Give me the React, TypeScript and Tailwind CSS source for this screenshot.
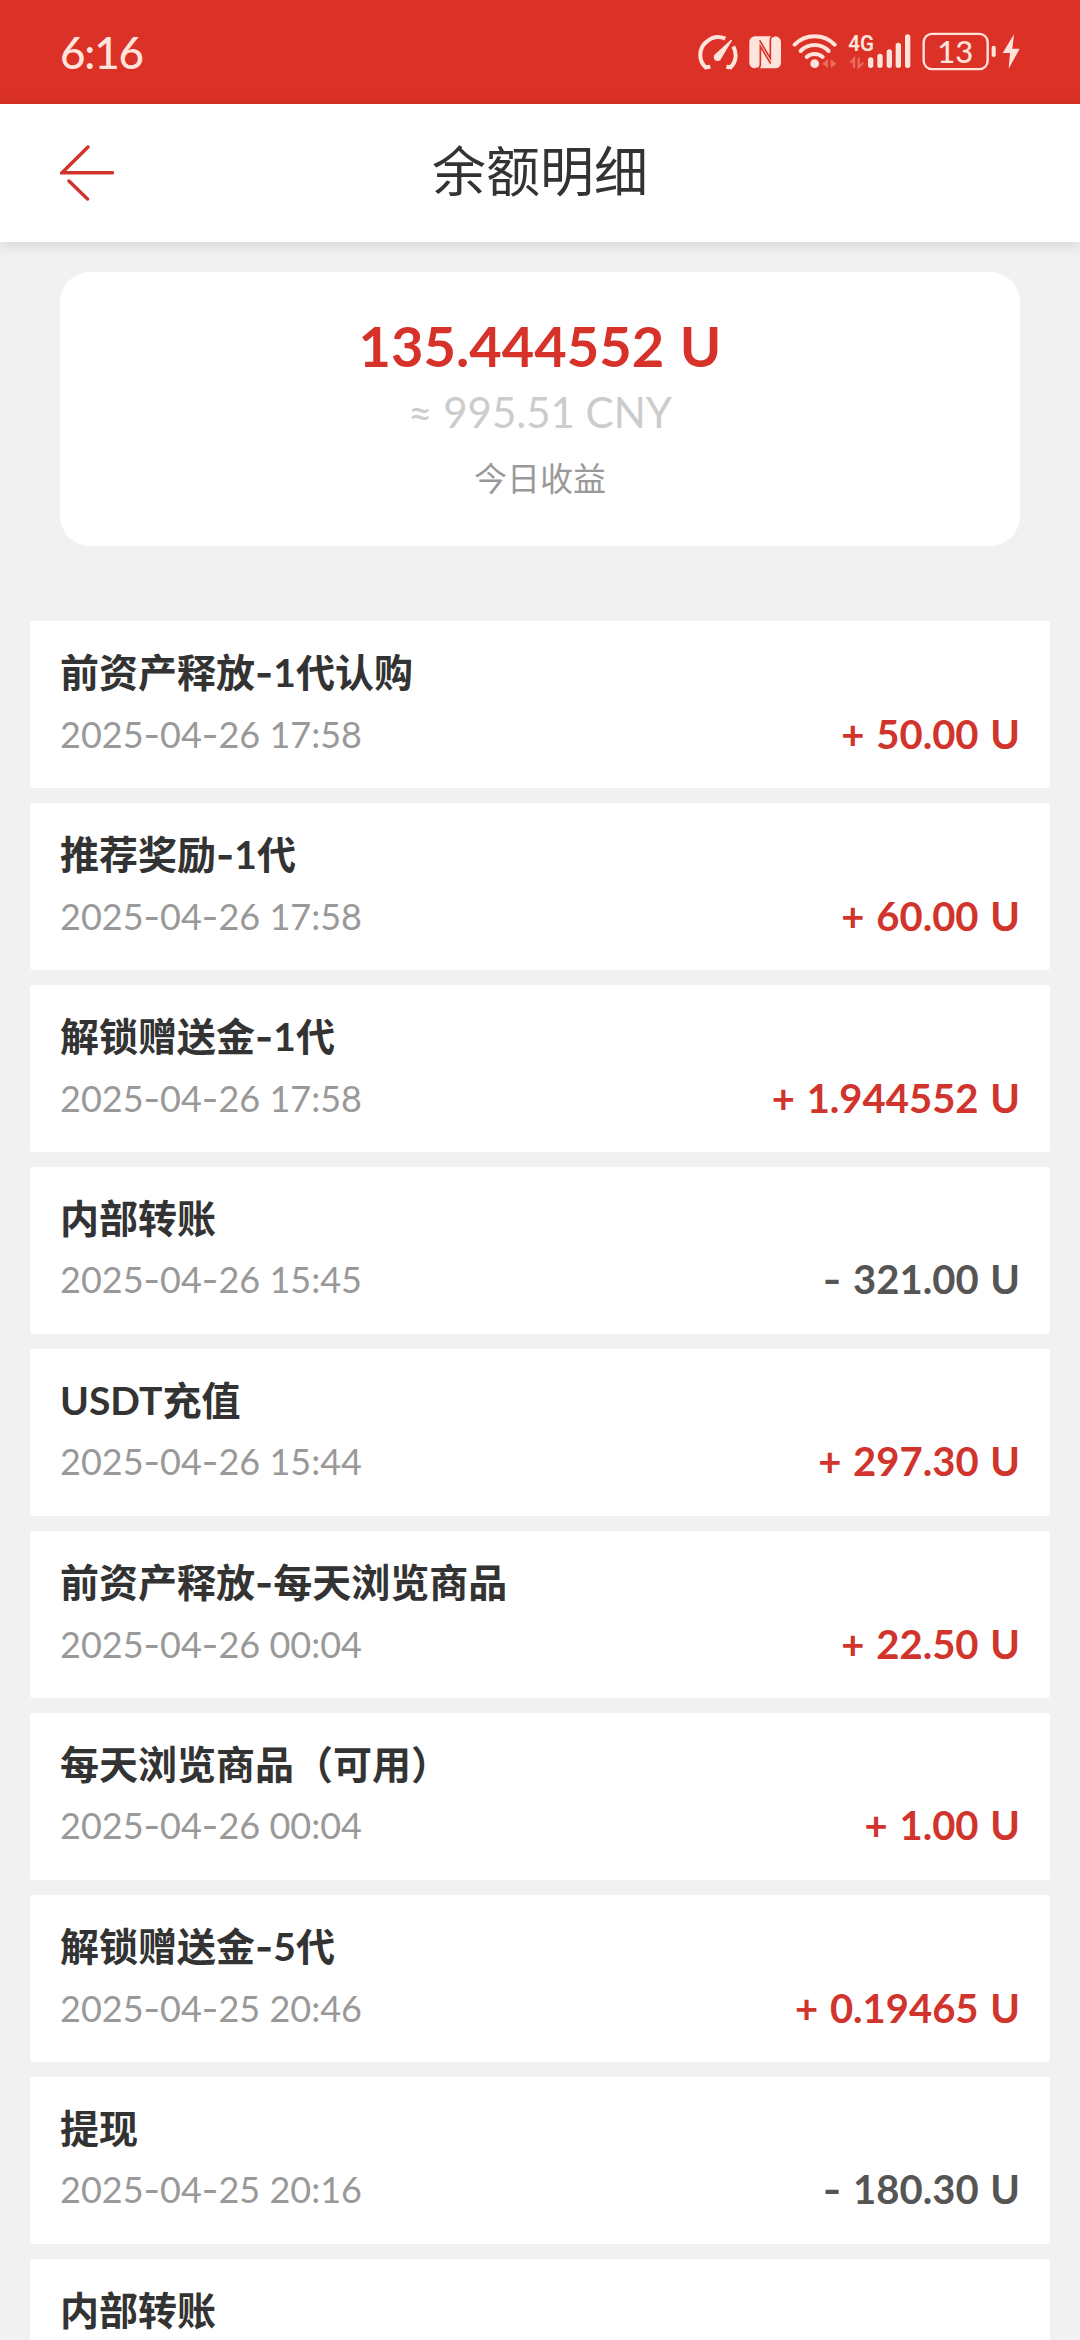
import React from 'react';

type RecordItem = {
  title: string;
  time?: string;
  amount?: string;
  income?: boolean;
};

const records: RecordItem[] = [
  { title: '前资产释放-1代认购', time: '2025-04-26 17:58', amount: '50.00', income: true },
  { title: '推荐奖励-1代', time: '2025-04-26 17:58', amount: '60.00', income: true },
  { title: '解锁赠送金-1代', time: '2025-04-26 17:58', amount: '1.944552', income: true },
  { title: '内部转账', time: '2025-04-26 15:45', amount: '321.00' },
  { title: 'USDT充值', time: '2025-04-26 15:44', amount: '297.30', income: true },
  { title: '前资产释放-每天浏览商品', time: '2025-04-26 00:04', amount: '22.50', income: true },
  { title: '每天浏览商品（可用）', time: '2025-04-26 00:04', amount: '1.00', income: true },
  { title: '解锁赠送金-5代', time: '2025-04-25 20:46', amount: '0.19465', income: true },
  { title: '提现', time: '2025-04-25 20:16', amount: '180.30' },
  { title: '内部转账' },
];

// Lato's hyphen is short and low, so hyphens use Inter
const Dashed = ({ text }: { text: string }) => (
  <>
    {text.split('-').map((part, i) => (
      <React.Fragment key={i}>
        {i > 0 && <span className="font-[Inter]">-</span>}
        {part}
      </React.Fragment>
    ))}
  </>
);

const StatusIcons = () => (
  <div className="flex items-center text-[#ffe4dc]">
    {/* Speed gauge */}
    <svg className="h-[38px] w-[40px]" viewBox="49 40 120 114" fill="none" stroke="currentColor" strokeWidth="12">
      <path d="M86 141 L72 143 C50 122 50 86 75 66 C91 52 112 49 131 57" />
      <path d="M155 80 C167 103 163 128 147 143 L134 141" />
      <path d="M149 62 L118 114 A10 10 0 1 1 104 103 Z" fill="currentColor" strokeWidth="4" strokeLinejoin="round" />
    </svg>

    {/* NFC */}
    <svg className="ml-[11px] h-[38px] w-[33px]" viewBox="202 40 99 114" fill="none" stroke="#dc3126" strokeWidth="5">
      <rect x="203" y="50" width="95" height="96" rx="17" fill="currentColor" stroke="none" />
      <path d="M222 147 Q236 147 236 134 V80 L267 132" />
      <path d="M279 49 Q266 49 266 62 V116 L234 62" />
    </svg>

    {/* Wi-Fi */}
    <svg className="ml-[10px] h-[38px] w-[46px]" viewBox="331 40 138 114" fill="none" stroke="currentColor" strokeWidth="12" strokeLinecap="round">
      <path d="M339 75 C371 41 427 41 459 75" />
      <path d="M357 94 C380 70 418 70 441 94" />
      <path d="M375 112 C388 100 410 100 423 112" />
      <circle cx="399" cy="132" r="13" fill="currentColor" stroke="none" />
      <path d="M439 119 V145 L422 132 Z M447 119 V145 L465 132 Z" fill="#ea6b60" stroke="none" />
    </svg>

    {/* 4G signal */}
    <svg className="ml-[10px] h-[38px] w-[64px] overflow-visible" viewBox="499 40 192 114" fill="none" stroke="currentColor" strokeWidth="16" strokeLinecap="round">
      <text x="500" y="94" fontSize="65" fontWeight="600" fontFamily="Roboto, sans-serif" fill="currentColor" stroke="none" textLength="77" lengthAdjust="spacingAndGlyphs">4G</text>
      <path d="M517 142 V117 L508 127 M531 117 V142 L543 131" stroke="#ea6b60" strokeWidth="7" />
      <path d="M567 121 V137 M595 110 V137 M623 97 V137 M650 77 V137 M678 52 V137" />
    </svg>

    {/* Battery */}
    <svg className="ml-[10px] h-[38px] w-[75px] overflow-visible" viewBox="721 40 225 114" fill="none" stroke="currentColor">
      <rect x="726" y="42.5" width="192" height="106" rx="25" strokeWidth="7" />
      <path d="M936 84 V106" strokeWidth="12" strokeLinecap="round" />
      <text x="821" y="129" textAnchor="middle" fontSize="93" fontWeight="500" fontFamily="Lato, sans-serif" fill="currentColor" stroke="none">13</text>
    </svg>

    {/* Charging bolt */}
    <svg className="ml-[5px] h-[38px] w-[18px]" viewBox="961 40 54 114" fill="currentColor">
      <path d="M997 44 L963 100 H985 L981 147 L1014 87 H992 Z" />
    </svg>
  </div>
);

const RecordRow = ({ item }: { item: RecordItem }) => (
  <li className="h-[167px] shrink-0 rounded-[3px] bg-white px-[30px] pt-6">
    <h2 className="text-[39px] font-bold leading-[54px] text-[#333]">
      <Dashed text={item.title} />
    </h2>
    {item.time && (
      <div className="mt-[7px] flex justify-between leading-[54px]">
        <time className="text-[36px] text-[#999]">
          <Dashed text={item.time} />
        </time>
        <span className={`text-[40px] font-bold [word-spacing:2px] ${item.income ? 'text-[#d0342c]' : 'text-[#555]'}`}>
          {item.income ? '+' : <span className="font-[Inter] font-semibold">-</span>} {item.amount} U
        </span>
      </div>
    )}
  </li>
);

const App = () => {
  return (
    <div className="flex h-[2340px] w-[1080px] flex-col overflow-hidden bg-[#f1f1f1] font-[Lato,'Noto_Sans_CJK_SC',sans-serif]">
      {/* Status bar */}
      <div className="flex h-[104px] shrink-0 items-center justify-between bg-[#dc3126] px-[60px]">
        <span className="text-[44px] font-medium leading-none tracking-[-1.2px] text-[#ffe4dc]">6:16</span>
        <StatusIcons />
      </div>

      {/* Header */}
      <header className="z-10 grid h-[138px] shrink-0 grid-cols-[1fr_auto_1fr] items-center bg-white px-[60px] shadow-[0_2px_14px_rgba(0,0,0,0.15)]">
        <button aria-label="返回" className="w-[54px]">
          <svg className="h-[56px] w-[54px]" viewBox="60 145 54 56" fill="none" stroke="#d0342c" strokeWidth="3.4" strokeLinecap="round">
            <path d="M88 147 L62 172.7 H112.5 M69 181 L87.5 199" />
          </svg>
        </button>
        <h1 className="pb-[3px] text-[54px] leading-none text-[#333]">余额明细</h1>
      </header>

      <main className="flex flex-col px-[30px] pt-[30px]">
        {/* Balance */}
        <section className="mx-[30px] flex h-[274px] shrink-0 flex-col items-center rounded-[30px] bg-white pt-[39px]">
          <p className="text-[56px] font-bold leading-[70px] text-[#d6322a] [word-spacing:2px]">135.444552 U</p>
          <p className="text-[42px] leading-[62px] text-[#ccc]">≈ 995.51 CNY</p>
          <p className="mt-2 text-[33px] leading-[54px] text-[#999]">今日收益</p>
        </section>

        {/* Records */}
        <ul className="mt-[75px] flex flex-col gap-[15px]">
          {records.map((item, index) => (
            <RecordRow key={index} item={item} />
          ))}
        </ul>
      </main>
    </div>
  );
};

export default App;
